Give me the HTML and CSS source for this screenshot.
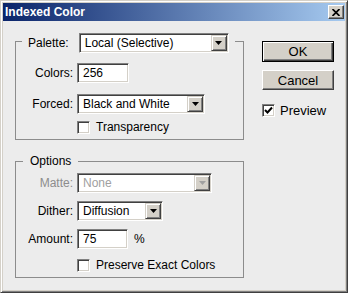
FILE: index.html
```html
<!DOCTYPE html>
<html lang="en">
<head>
    <meta charset="UTF-8">
    <title>Indexed Color</title>
    <link rel="stylesheet" href="styles.css">
</head>
<body>
    <div class="window">
        <div class="titlebar">
            <span class="title">Indexed Color</span>
            <span class="close">
                <svg width="8" height="7" viewBox="0 0 8 7"><path d="M0.5 0 L7.5 7 M7.5 0 L0.5 7" stroke="#000" stroke-width="1.7"/></svg>
            </span>
        </div>
        <div class="content">
            <div class="left">
                <fieldset class="group group1">
                    <legend class="palette">
                        <span>Palette:</span>
                        <div class="select w-palette">Local (Selective)<span class="arrow"><svg width="7" height="4" viewBox="0 0 7 4"><polygon points="0,0 7,0 3.5,4" fill="#000"/></svg></span></div>
                    </legend>
                    <div class="fields">
                        <div class="row">
                            <label>Colors:</label>
                            <div class="input w-colors">256</div>
                        </div>
                        <div class="row">
                            <label>Forced:</label>
                            <div class="select w-forced">Black and White<span class="arrow"><svg width="7" height="4" viewBox="0 0 7 4"><polygon points="0,0 7,0 3.5,4" fill="#000"/></svg></span></div>
                        </div>
                        <div class="row checkline">
                            <span class="box"></span>
                            <span>Transparency</span>
                        </div>
                    </div>
                </fieldset>

                <fieldset class="group group2">
                    <legend class="options">Options</legend>
                    <div class="fields">
                        <div class="row disabled">
                            <label>Matte:</label>
                            <div class="select w-matte">None<span class="arrow"><svg width="7" height="4" viewBox="0 0 7 4"><polygon points="0,0 7,0 3.5,4" fill="#a0a0a0"/></svg></span></div>
                        </div>
                        <div class="row">
                            <label>Dither:</label>
                            <div class="select w-dither">Diffusion<span class="arrow"><svg width="7" height="4" viewBox="0 0 7 4"><polygon points="0,0 7,0 3.5,4" fill="#000"/></svg></span></div>
                        </div>
                        <div class="row">
                            <label>Amount:</label>
                            <div class="input w-amount">75</div>
                            <span class="unit">%</span>
                        </div>
                        <div class="row checkline">
                            <span class="box"></span>
                            <span>Preserve Exact Colors</span>
                        </div>
                    </div>
                </fieldset>
            </div>

            <div class="right">
                <div class="button default">OK</div>
                <div class="button">Cancel</div>
                <div class="preview">
                    <span class="box"><svg width="9" height="9" viewBox="0 0 9 9"><polyline points="1,4 3.5,6.5 8,1.5" fill="none" stroke="#000" stroke-width="2"/></svg></span>
                    <span>Preview</span>
                </div>
            </div>
        </div>
    </div>
</body>
</html>
```

FILE: styles.css
```css
body {
    margin: 0;
    font-family: "Liberation Sans", Arial, sans-serif;
    font-size: 12px;
    color: #000;
}
.window {
    width: 348px;
    height: 293px;
    box-sizing: border-box;
    border: 1px solid;
    border-color: #d4d0c8 #404040 #404040 #d4d0c8;
    box-shadow: inset 1px 1px #fff, inset -1px -1px #808080;
    padding: 2px;
    background: #d4d0c8;
    display: flex;
    flex-direction: column;
}
.titlebar {
    height: 18px;
    flex: none;
    display: flex;
    align-items: center;
    justify-content: space-between;
    padding: 0 1px 0 2px;
    background: linear-gradient(to right, #0a246a, #a6caf0);
    color: #fff;
    font-weight: bold;
}
.close {
    width: 16px;
    height: 14px;
    box-sizing: border-box;
    display: flex;
    align-items: center;
    justify-content: center;
    background: #d4d0c8;
    border: 1px solid;
    border-color: #fff #404040 #404040 #fff;
    box-shadow: inset -1px -1px #808080;
}
.content {
    flex: 1;
    display: flex;
    background: #ececec;
    padding: 8px 0 0 12px;
}
.left {
    width: 229px;
    display: flex;
    flex-direction: column;
}
.group {
    margin: 0;
    border: 1px solid #8c8c8c;
    min-width: 0;
}
.group1 {
    padding: 10px 0 5px 0;
}
.group2 {
    margin-top: 14px;
    padding: 5px 0 5px 0;
}
.palette {
    margin-left: 6px;
    padding: 4px 6px 0 6px;
    display: flex;
    align-items: center;
    gap: 10px;
}
.options {
    margin-left: 7px;
    padding: 0 7px;
    line-height: 14px;
}
.fields {
    display: flex;
    flex-direction: column;
}
.group1 .fields {
    gap: 11px;
}
.group2 .fields {
    gap: 8px;
}
.row {
    display: flex;
    align-items: center;
}
.row label {
    width: 57px;
    margin-right: 4px;
    text-align: right;
}
.checkline {
    padding-left: 61px;
    gap: 6px;
    line-height: 13px;
}
.group1 .checkline {
    margin-top: -4px;
}
.group2 .checkline {
    margin-top: 2px;
}
.select, .input {
    box-sizing: border-box;
    height: 20px;
    background: #fff;
    border: 1px solid;
    border-color: #808080 #fff #fff #808080;
    box-shadow: inset 1px 1px #404040, inset -1px -1px #d4d0c8;
    display: flex;
    align-items: center;
    padding: 0 1px 0 5px;
}
.arrow {
    margin-left: auto;
    width: 16px;
    height: 16px;
    box-sizing: border-box;
    display: flex;
    align-items: center;
    justify-content: center;
    background: #d4d0c8;
    border: 1px solid;
    border-color: #d4d0c8 #404040 #404040 #d4d0c8;
    box-shadow: inset 1px 1px #fff, inset -1px -1px #808080;
}
.w-palette { width: 150px; }
.w-colors { width: 52px; }
.w-forced { width: 128px; }
.w-matte { width: 135px; }
.w-dither { width: 86px; }
.w-amount { width: 51px; }
.unit {
    margin-left: 6px;
}
.disabled label {
    color: #8c8c8c;
}
.disabled .select {
    color: #a0a0a0;
}
.box {
    width: 13px;
    height: 13px;
    box-sizing: border-box;
    flex: none;
    display: flex;
    align-items: center;
    justify-content: center;
    background: #fff;
    border: 1px solid;
    border-color: #808080 #fff #fff #808080;
    box-shadow: inset 1px 1px #404040, inset -1px -1px #d4d0c8;
}
.right {
    width: 72px;
    margin-left: 18px;
    padding-top: 12px;
    display: flex;
    flex-direction: column;
}
.button {
    height: 20px;
    box-sizing: border-box;
    display: flex;
    align-items: center;
    justify-content: center;
    background: #d4d0c8;
    border: 1px solid;
    border-color: #fff #404040 #404040 #fff;
    box-shadow: inset -1px -1px #808080;
    margin-bottom: 8px;
    font-size: 13px;
}
.button.default {
    height: 21px;
    border: 1px solid #000;
    box-shadow: inset 1px 1px #fff, inset -1px -1px #404040, inset -2px -2px #808080;
}
.preview {
    margin-top: 5px;
    display: flex;
    align-items: center;
    gap: 5px;
    font-size: 13px;
}
```
